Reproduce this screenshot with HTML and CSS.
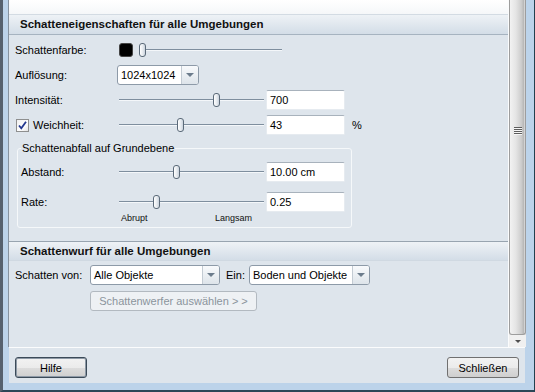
FILE: index.html
```html
<!DOCTYPE html>
<html lang="de">
  <head>
    <meta charset="UTF-8" />
    <title>Schatten</title>
    <link rel="stylesheet" href="styles.css">
  </head>
  <body>
    <div class="window">
      <div class="main">
        <div class="scroll">
          <div class="top-gap"></div>

          <div class="section-head">Schatteneigenschaften für alle Umgebungen</div>
          <div class="section-body">
            <div class="row">
              <span class="label">Schattenfarbe:</span>
              <span class="swatch"></span>
              <div class="slider slider-color"><span class="thumb" style="left:0px"></span></div>
            </div>
            <div class="row row-gap">
              <span class="label">Auflösung:</span>
              <div class="combo combo-res">
                <span class="combo-text">1024x1024</span>
                <span class="combo-btn"><span class="arrow"></span></span>
              </div>
            </div>
            <div class="row row-gap">
              <span class="label">Intensität:</span>
              <div class="slider"><span class="thumb" style="left:94px"></span></div>
              <div class="field">700</div>
            </div>
            <div class="row row-gap">
              <span class="label">
                <span class="check">
                  <svg width="11" height="11" viewBox="0 0 11 11">
                    <path d="M2 5.5 L4.3 8.3 L9 1.8" fill="none" stroke="#23388f" stroke-width="1.8" />
                  </svg>
                </span>
                Weichheit:
              </span>
              <div class="slider"><span class="thumb" style="left:58px"></span></div>
              <div class="field">43</div>
              <span class="unit">%</span>
            </div>

            <fieldset class="group">
              <legend>Schattenabfall auf Grundebene</legend>
              <div class="row group-first">
                <span class="label label-group">Abstand:</span>
                <div class="slider"><span class="thumb" style="left:54px"></span></div>
                <div class="field">10.00 cm</div>
              </div>
              <div class="row group-next">
                <span class="label label-group">Rate:</span>
                <div class="slider"><span class="thumb" style="left:34px"></span></div>
                <div class="field">0.25</div>
              </div>
              <div class="scale">
                <span>Abrupt</span>
                <span>Langsam</span>
              </div>
            </fieldset>
          </div>

          <div class="section-head section-head-2">Schattenwurf für alle Umgebungen</div>
          <div class="section-body section-body-2">
            <div class="row">
              <span class="label label-from">Schatten von:</span>
              <div class="combo combo-from">
                <span class="combo-text">Alle Objekte</span>
                <span class="combo-btn"><span class="arrow"></span></span>
              </div>
              <span class="label-on">Ein:</span>
              <div class="combo combo-on">
                <span class="combo-text">Boden und Objekte</span>
                <span class="combo-btn"><span class="arrow"></span></span>
              </div>
            </div>
            <div class="row-button">
              <button type="button" class="btn-disabled" disabled>Schattenwerfer auswählen &gt; &gt;</button>
            </div>
          </div>
        </div>

        <div class="scrollbar">
          <div class="sb-thumb">
            <span class="grip"></span>
          </div>
          <div class="sb-arrow"><span class="sb-tri"></span></div>
        </div>
      </div>

      <div class="footer">
        <button type="button" class="btn btn-default">Hilfe</button>
        <button type="button" class="btn">Schließen</button>
      </div>
    </div>
  </body>
</html>
```

FILE: styles.css
```css
body {
  margin: 0;
  font-family: "Liberation Sans", Arial, sans-serif;
  font-size: 11px;
  color: #000;
  background: #fff;
}
.window {
  width: 535px;
  height: 392px;
  box-sizing: border-box;
  display: flex;
  flex-direction: column;
  background: #bcd3ea;
  border-left: 3px solid #56616e;
  border-right: 1px solid #22404f;
  border-bottom: 2px solid #2b4656;
  padding: 0 8px 7px 5px;
}
.main {
  display: flex;
  height: 347px;
  flex: none;
}
.scroll {
  flex: 1;
  background: #dee5ec;
  border-left: 1px solid #8793a0;
  border-right: 1px solid #fbfcfd;
  overflow: hidden;
}
.top-gap {
  height: 14px;
  background: linear-gradient(#ffffff, #f5f7f9);
}
.section-head {
  height: 19px;
  line-height: 19px;
  padding-left: 11px;
  font-weight: bold;
  font-size: 11.5px;
  color: #111;
  border-top: 1px solid #d3dbe3;
  border-bottom: 1px solid #a6b3c0;
  background: linear-gradient(#eef2f6, #d3dde7);
}
.section-head-2 {
  height: 18px;
  line-height: 18px;
  border-top: 1px solid #98a4b0;
  border-bottom: 1px solid #d0d9e2;
}
.section-body {
  padding: 5px 0 13px 6px;
}
.section-body-2 {
  padding: 4px 0 0 6px;
}
.row {
  display: flex;
  align-items: center;
  height: 20px;
}
.row-gap {
  margin-top: 5px;
}
.label {
  width: 102px;
  flex: none;
  display: flex;
  align-items: center;
}
.label-group {
  width: 96px;
}
.label-from {
  width: 75px;
}
.label-on {
  margin: 0 4px 0 6px;
  width: 19px;
}
.swatch {
  width: 12px;
  height: 12px;
  margin-left: 2px;
  background: #000;
  border: 1px solid #444;
  border-radius: 3px;
}
.slider {
  position: relative;
  width: 145px;
  height: 20px;
  margin-left: 2px;
  flex: none;
}
.slider::before {
  content: "";
  position: absolute;
  left: 0;
  right: 0;
  top: 9px;
  height: 1px;
  background: #7e8e9e;
  border-bottom: 1px solid #f4f7fa;
}
.slider-color {
  width: 143px;
  margin-left: 6px;
}
.thumb {
  position: absolute;
  top: 3px;
  width: 5px;
  height: 12px;
  border: 1px solid #5b6a79;
  border-radius: 3px;
  background: linear-gradient(90deg, #ffffff, #e4e9ee 60%, #c9d2dc);
}
.field {
  width: 79px;
  height: 20px;
  box-sizing: border-box;
  margin-left: 2px;
  padding-left: 3px;
  line-height: 19px;
  background: #fff;
  border: 1px solid #e6ebf0;
  border-top-color: #a8b2bc;
  border-radius: 2px;
  flex: none;
}
.unit {
  margin-left: 7px;
}
.check {
  width: 11px;
  height: 11px;
  margin: 0 4px 0 1px;
  border: 1px solid #8e8f8f;
  background: linear-gradient(135deg, #f0f0f0, #ffffff 60%, #e4e4e4);
  display: flex;
  align-items: center;
  justify-content: center;
}
.combo {
  display: flex;
  height: 20px;
  box-sizing: border-box;
  border: 1px solid #8d9aa8;
  border-radius: 3px;
  background: #fff;
  flex: none;
}
.combo-res {
  width: 82px;
}
.combo-from {
  width: 130px;
}
.combo-on {
  width: 121px;
}
.combo-text {
  flex: 1;
  padding-left: 3px;
  line-height: 18px;
  white-space: nowrap;
}
.combo-btn {
  width: 16px;
  border-left: 1px solid #c3cbd3;
  border-radius: 0 2px 2px 0;
  background: linear-gradient(#f8fafc, #dde4ea);
  display: flex;
  align-items: center;
  justify-content: center;
}
.arrow {
  width: 0;
  height: 0;
  border-left: 4px solid transparent;
  border-right: 4px solid transparent;
  border-top: 4px solid #6c7c8c;
}
.group {
  margin: 7px 0 0 2px;
  width: 335px;
  box-sizing: border-box;
  border: 1px solid #f5f8fa;
  border-radius: 3px;
  padding: 0 0 2px 3px;
  min-width: 0;
}
.group legend {
  padding: 0 1px;
  line-height: 13px;
}
.group-first {
  margin-top: 7px;
}
.group-next {
  margin-top: 10px;
}
.scale {
  display: flex;
  justify-content: space-between;
  width: 131px;
  margin-left: 100px;
  height: 13px;
  line-height: 13px;
  font-size: 9px;
  color: #111;
}
.row-button {
  margin: 6px 0 0 75px;
}
.btn-disabled {
  width: 167px;
  height: 20px;
  padding: 0;
  font-family: inherit;
  font-size: 11px;
  color: #8b949c;
  background: #eef1f4;
  border: 1px solid #b2b9c0;
  border-radius: 3px;
}
.scrollbar {
  width: 17px;
  display: flex;
  flex-direction: column;
  background: #e8e8e8;
}
.sb-thumb {
  flex: 1;
  box-sizing: border-box;
  border: 1px solid #9d9d9d;
  border-top: none;
  border-radius: 0 0 3px 3px;
  background: linear-gradient(90deg, #f2f2f2, #e4e4e4 40%, #cdcdcd 75%, #b9b9b9 90%, #e0e0e0);
  padding-top: 127px;
  display: flex;
  justify-content: center;
}
.grip {
  width: 8px;
  height: 8px;
  background: repeating-linear-gradient(#5d5d5d 0 1px, #f6f6f6 1px 2px);
}
.sb-arrow {
  height: 12px;
  display: flex;
  justify-content: center;
  align-items: center;
  background: #f0f0f0;
}
.sb-tri {
  width: 0;
  height: 0;
  border-left: 3px solid transparent;
  border-right: 3px solid transparent;
  border-top: 3px solid #4e4e4e;
}
.footer {
  flex: 1;
  display: flex;
  justify-content: space-between;
  align-items: flex-start;
  padding: 9px 6px 0 6px;
  margin-left: 1px;
  margin-right: 1px;
  background: #dee5ec;
  border-top: 1px solid #fbfcfd;
}
.btn {
  width: 72px;
  height: 21px;
  padding: 0;
  font-family: inherit;
  font-size: 11px;
  color: #000;
  border: 1px solid #707070;
  border-radius: 3px;
  background: linear-gradient(#f2f2f2, #ebebeb 50%, #dddddd 50%, #cfcfcf);
}
.btn-default {
  border-color: #3b4a58;
  box-shadow: inset 0 0 0 1px #8d99a6;
}
```
